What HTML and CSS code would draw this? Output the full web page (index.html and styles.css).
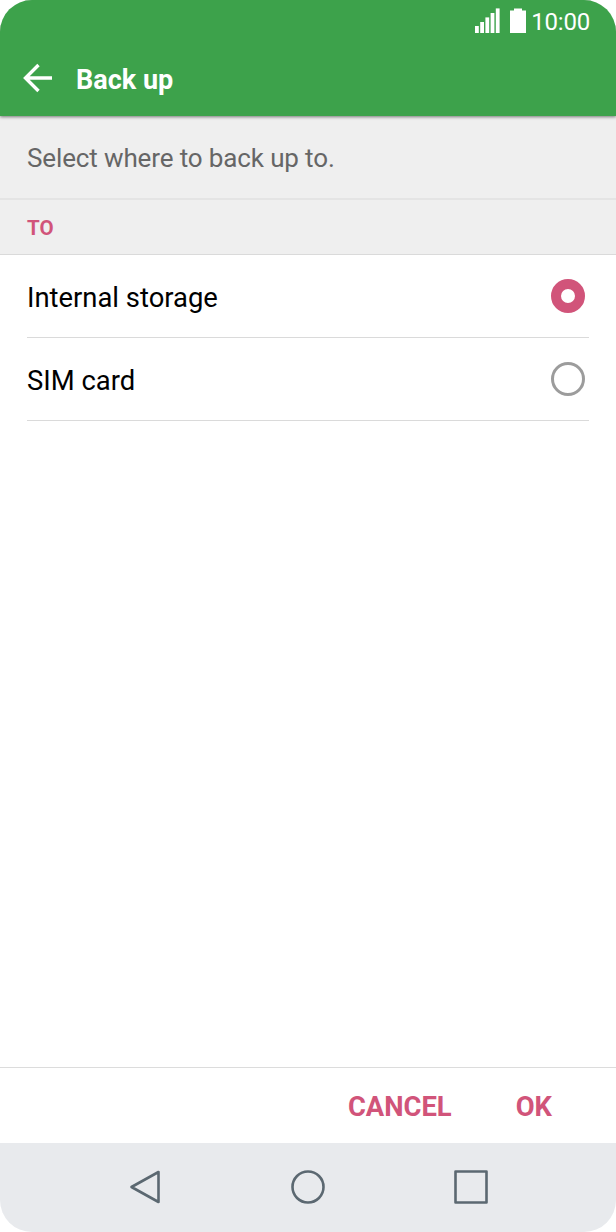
FILE: index.html
```html
<!DOCTYPE html>
<html lang="en">
<head>
    <meta charset="UTF-8">
    <meta name="viewport" content="width=device-width, initial-scale=1.0">
    <title>Back up</title>
    <link rel="stylesheet" href="styles.css">
</head>
<body>
    <div class="phone">
        <header class="header">
            <div class="status-bar">
                <svg class="signal" width="25" height="25" viewBox="0 0 25 25" fill="#fff">
                    <rect x="0" y="18" width="3.8" height="7"/>
                    <rect x="5.2" y="14" width="3.8" height="11"/>
                    <rect x="10.4" y="9.4" width="3.8" height="15.6"/>
                    <rect x="15.6" y="5" width="3.8" height="20"/>
                    <rect x="20.8" y="0.4" width="3.8" height="24.6"/>
                </svg>
                <svg class="battery" width="16" height="25" viewBox="0 0 16 25" fill="#fff">
                    <path d="M4 0.4h8v2.2h4V25H0V2.600h4z"/>
                </svg>
                <span class="clock">10:00</span>
            </div>
            <div class="title-bar">
                <svg class="back" width="30" height="30" viewBox="0 0 30 30" fill="none" stroke="#fff" stroke-width="3.4">
                    <path d="M2.500 15H29M15.500 2L2.500 15l13 13"/>
                </svg>
                <h1 class="title">Back up</h1>
            </div>
        </header>

        <main class="content">
            <p class="hint">Select where to back up to.</p>
            <h2 class="section">TO</h2>
            <div class="options">
                <div class="option">
                    <span class="name">Internal storage</span>
                    <span class="radio selected"></span>
                </div>
                <div class="option">
                    <span class="name">SIM card</span>
                    <span class="radio"></span>
                </div>
            </div>
        </main>

        <div class="actions">
            <span class="btn">CANCEL</span>
            <span class="btn">OK</span>
        </div>

        <nav class="nav">
            <svg width="36" height="36" viewBox="0 0 36 36">
                <path d="M31.500 3v30L4.500 18z"/>
            </svg>
            <svg width="36" height="36" viewBox="0 0 36 36">
                <circle cx="18" cy="18" r="15.500"/>
            </svg>
            <svg width="36" height="36" viewBox="0 0 36 36">
                <rect x="2.500" y="2.500" width="31" height="31"/>
            </svg>
        </nav>
    </div>
</body>
</html>
```
FILE: styles.css
```css
* {
    margin: 0;
    padding: 0;
    box-sizing: border-box;
}

body {
    font-family: Roboto, sans-serif;
    background: #fff;
}

.phone {
    width: 616px;
    height: 1232px;
    display: flex;
    flex-direction: column;
    border-radius: 32px;
    overflow: hidden;
    background: #fff;
}

/* Header */
.header {
    height: 116px;
    background: #3da24b;
    color: #fff;
    box-shadow: 0 1px 3px rgba(0, 0, 0, 0.5);
    z-index: 1;
}

.status-bar {
    height: 41px;
    display: flex;
    justify-content: flex-end;
    align-items: center;
    padding-right: 26px;
}

.battery {
    margin: 0 5px 0 10px;
}

.clock {
    font-size: 24px;
    line-height: 28px;
    letter-spacing: -0.2px;
    padding-top: 2px;
}

.title-bar {
    height: 75px;
    display: flex;
    align-items: center;
    padding: 0 0 1px 23px;
}

.title {
    font-size: 27px;
    line-height: 32px;
    font-weight: 700;
    padding: 4px 0 0 23px;
}

/* Content */
.content {
    flex: 1;
}

.hint {
    height: 84px;
    padding: 27px 27px 0;
    background: #efefef;
    border-bottom: 2px solid #e4e4e4;
    color: #666;
    font-size: 26px;
    line-height: 30px;
    letter-spacing: -0.13px;
}

.section {
    height: 55px;
    padding: 16px 27px 0;
    background: #efefef;
    border-bottom: 1px solid #dadada;
    color: #d1547a;
    font-size: 20.5px;
    line-height: 24px;
    font-weight: 700;
}

.options {
    padding: 0 27px;
}

.option {
    height: 83px;
    display: flex;
    justify-content: space-between;
    align-items: center;
    padding-right: 4px;
    border-bottom: 1px solid #dadada;
}

.name {
    color: #000;
    font-size: 27.4px;
    line-height: 32px;
    padding-top: 4px;
}

.radio {
    width: 34px;
    height: 34px;
    border: 3px solid #9c9c9c;
    border-radius: 50%;
}

.radio.selected {
    border: 10px solid #d1547a;
}

/* Footer buttons */
.actions {
    height: 76px;
    display: flex;
    justify-content: flex-end;
    align-items: center;
    gap: 64px;
    padding: 2px 64px 0 0;
    border-top: 1px solid #dcdcdc;
}

.btn {
    color: #d1547a;
    font-size: 27.4px;
    line-height: 32px;
    font-weight: 700;
}

/* Navigation keys */
.nav {
    height: 89px;
    display: flex;
    justify-content: center;
    align-items: center;
    gap: 127px;
    padding-bottom: 1px;
    background: #e8eaed;
}

.nav svg {
    fill: none;
    stroke: #5b6871;
    stroke-width: 2.6;
    stroke-linejoin: round;
}
```
